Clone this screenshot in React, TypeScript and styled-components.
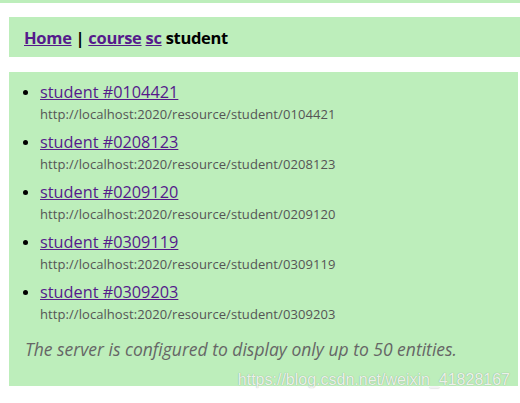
import React from "react";
import styled, { createGlobalStyle } from "styled-components";

const Global = createGlobalStyle`
  html, body { margin: 0; padding: 0; background: #fff; }
  body { font-family: "Open Sans", "Noto Sans", sans-serif; }
`;

const Page = styled.div`
  position: relative;
  width: 520px;
  height: 403px;
  overflow: hidden;
`;

const TopBar = styled.div`
  height: 3px;
  background: #bdeebb;
`;

const Header = styled.div`
  margin: 14px 0 0 9px;
  height: 40px;
  background: #bdeebb;
  display: flex;
  align-items: center;
  padding-left: 15px;
  font-size: 16.5px;
  font-weight: 700;
  color: #000;
  letter-spacing: -0.3px;
`;

const NavLink = styled.a`
  color: #551a8b;
  text-decoration: underline;
`;

const Content = styled.div`
  margin: 15px 2px 0 9px;
  height: 314px;
  background: #bdeebb;
  padding: 9px 0 0 0;
  box-sizing: border-box;
`;

const List = styled.ul`
  margin: 0;
  padding: 0 0 0 31px;
`;

const Item = styled.li`
  height: 50px;
  &::marker { font-size: 14px; }
`;

const ItemLink = styled.a`
  display: block;
  font-size: 16.3px;
  line-height: 22px;
  color: #551a8b;
  text-decoration: underline;
`;

const Url = styled.div`
  font-size: 13px;
  line-height: 22px;
  color: #555;
  letter-spacing: 0.07px;
`;

const Note = styled.p`
  margin: 6px 0 0 16px;
  font-size: 17.5px;
  font-style: italic;
  color: #666;
  letter-spacing: 0;
`;

const Watermark = styled.div`
  position: absolute;
  right: 10px;
  top: 371px;
  font-family: "Liberation Sans", Arial, sans-serif;
  font-size: 16px;
  color: rgba(255, 255, 255, 0.85);
  text-shadow: 0 0 1px rgba(0, 0, 0, 0.35);
`;

const ids = ["0104421", "0208123", "0209120", "0309119", "0309203"];

export default function App() {
  return (
    <Page>
      <Global />
      <TopBar />
      <Header>
        <NavLink href="#">Home</NavLink>
        &nbsp;|&nbsp;
        <NavLink href="#">course</NavLink>
        &nbsp;
        <NavLink href="#">sc</NavLink>
        &nbsp;student
      </Header>
      <Content>
        <List>
          {ids.map((id) => (
            <Item key={id}>
              <ItemLink href="#">student #{id}</ItemLink>
              <Url>http://localhost:2020/resource/student/{id}</Url>
            </Item>
          ))}
        </List>
        <Note>The server is configured to display only up to 50 entities.</Note>
      </Content>
      <Watermark>https://blog.csdn.net/weixin_41828167</Watermark>
    </Page>
  );
}
